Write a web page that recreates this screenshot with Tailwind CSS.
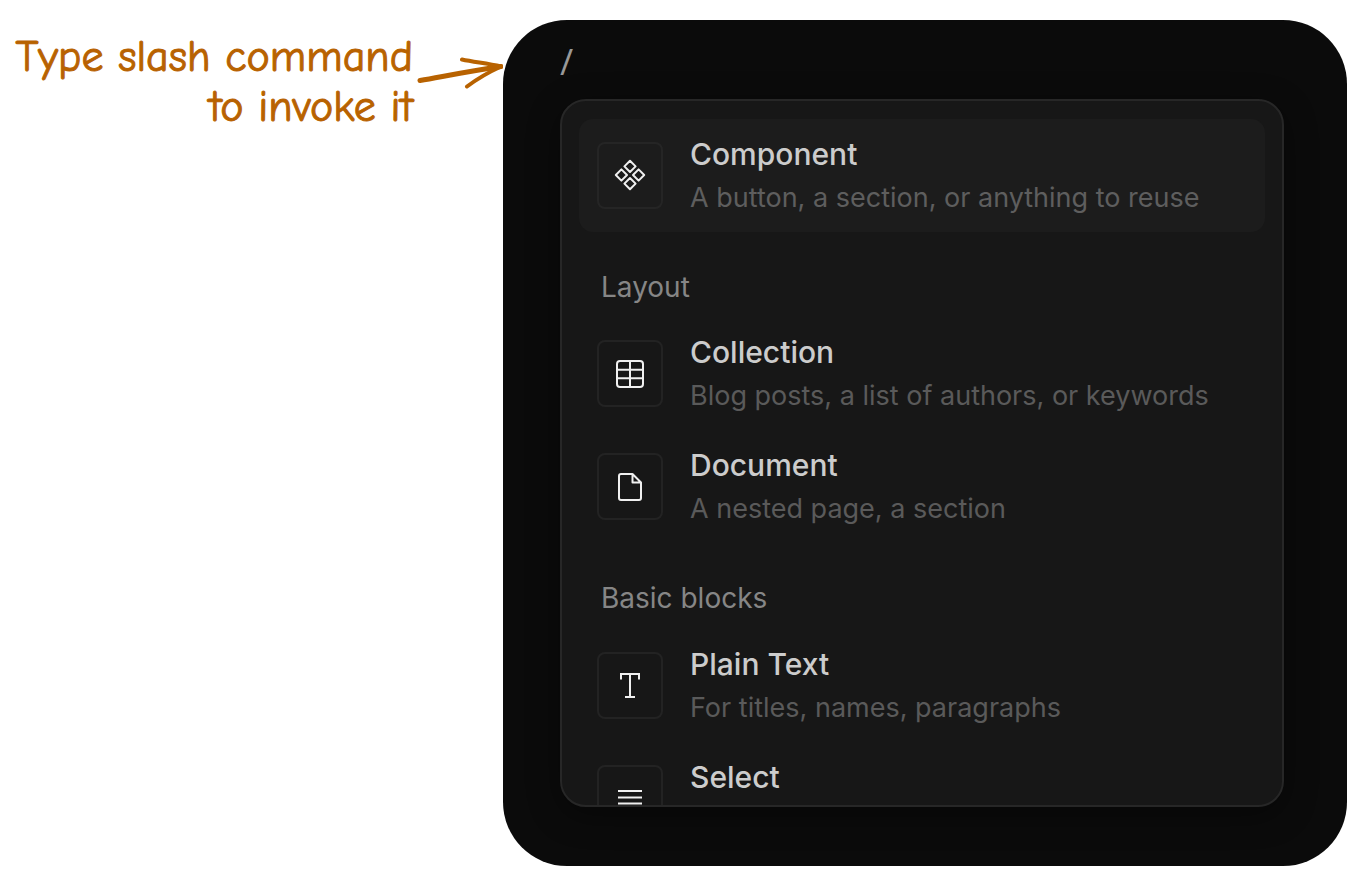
<!DOCTYPE html>
<html lang="en">
<head>
    <meta charset="UTF-8">
    <meta name="viewport" content="width=device-width, initial-scale=1.0">
    <title>Slash command menu</title>
    <script src="https://cdn.jsdelivr.net/npm/@tailwindcss/browser@4"></script>
</head>
<body class="bg-white font-['Inter',sans-serif]">
    <main class="grid grid-cols-[503fr_844fr] h-screen py-5 pr-5">
        <!-- Annotation -->
        <div class="flex items-start justify-end">
            <p class="pt-3 text-right text-[44px] leading-[50px] font-medium text-[#b86200] font-['Comic_Neue','Comic_Sans_MS',cursive] [-webkit-text-stroke:1px_#b86200] whitespace-nowrap">
                Type slash command<br>to invoke it
            </p>
            <svg class="w-[90px] h-[40px] mt-8 shrink-0" viewBox="0 0 90 40" fill="none" stroke="#b86200" stroke-width="5" stroke-linecap="round" stroke-linejoin="round" aria-hidden="true">
                <path d="M7 28.500C28 25 48 20.500 88 14.500"></path>
                <path d="M49 7.500C61 10 74 11.500 88 14.500C76 20 64 27 54 34.500" stroke-width="4"></path>
            </svg>
        </div>

        <!-- Editor card -->
        <section class="flex flex-col min-h-0 rounded-[64px] bg-[#0b0b0b] pl-[57px] pr-[63px] pt-5 pb-[59px]">
            <input type="text" value="/" aria-label="Command" class="h-11 w-full bg-transparent font-['Open_Sans',sans-serif] text-[36px] text-[#999999] outline-none">

            <div class="mt-[15px] flex-1 min-h-0 overflow-hidden rounded-[26px] border-2 border-[#272727] bg-[#171717] p-[17px] pt-[18px] shadow-[0_8px_32px_#00000066]">
                <button type="button" class="flex w-full items-center gap-[27px] rounded-[14px] bg-[#1c1c1c] px-[18px] h-[113px] text-left">
                    <span class="flex h-[67px] w-[66px] shrink-0 items-center justify-center rounded-[8px] border-2 border-[#252525]">
                        <svg class="size-[34px]" viewBox="0 0 34 34" fill="none" stroke="#f0f0f0" stroke-width="2" stroke-linejoin="round" aria-hidden="true">
                            <path d="M17 1.800l5.600 5.600L17 13l-5.600-5.600zM8.400 10.400L14 16l-5.600 5.600L2.800 16zM25.600 10.400l5.600 5.600-5.600 5.600L20 16zM17 19l5.600 5.600-5.600 5.600-5.600-5.600z"></path>
                        </svg>
                    </span>
                    <span class="h-[86px] min-w-0">
                        <span class="block text-[30px] leading-[43px] font-medium text-[#cccccc]">Component</span>
                        <span class="block text-[27px] leading-[43px] text-[#5e5e5e] whitespace-nowrap">A button, a section, or anything to reuse</span>
                    </span>
                </button>

                <h2 class="h-[85px] pt-[34px] pl-[22px] text-[28px] leading-[43px] text-[#868686]">Layout</h2>
                <button type="button" class="flex w-full items-center gap-[27px] rounded-[14px] px-[18px] h-[113px] text-left">
                    <span class="flex h-[67px] w-[66px] shrink-0 items-center justify-center rounded-[8px] border-2 border-[#232323]">
                        <svg class="size-[34px]" viewBox="0 0 34 34" fill="none" stroke="#f0f0f0" stroke-width="2" aria-hidden="true">
                            <rect x="4" y="4" width="26" height="26" rx="3"></rect>
                            <path d="M17 4v26M4 12.700h26M4 21.300h26"></path>
                        </svg>
                    </span>
                    <span class="h-[86px] min-w-0">
                        <span class="block text-[30px] leading-[43px] font-medium text-[#cccccc]">Collection</span>
                        <span class="block text-[27px] leading-[43px] text-[#5a5a5a] whitespace-nowrap">Blog posts, a list of authors, or keywords</span>
                    </span>
                </button>
                <button type="button" class="flex w-full items-center gap-[27px] rounded-[14px] px-[18px] h-[113px] text-left">
                    <span class="flex h-[67px] w-[66px] shrink-0 items-center justify-center rounded-[8px] border-2 border-[#232323]">
                        <svg class="size-[34px]" viewBox="0 0 34 34" fill="none" stroke="#f0f0f0" stroke-width="2" stroke-linejoin="round" aria-hidden="true">
                            <path d="M19.500 4H8a2 2 0 0 0-2 2v22a2 2 0 0 0 2 2h18a2 2 0 0 0 2-2V12.500zM19.500 4v8.500H28"></path>
                        </svg>
                    </span>
                    <span class="h-[86px] min-w-0">
                        <span class="block text-[30px] leading-[43px] font-medium text-[#cccccc]">Document</span>
                        <span class="block text-[27px] leading-[43px] text-[#5a5a5a] whitespace-nowrap">A nested page, a section</span>
                    </span>
                </button>

                <h2 class="h-[86px] pt-[34px] pl-[22px] text-[28px] leading-[43px] text-[#868686]">Basic blocks</h2>
                <button type="button" class="flex w-full items-center gap-[27px] rounded-[14px] px-[18px] h-[113px] text-left">
                    <span class="flex h-[67px] w-[66px] shrink-0 items-center justify-center rounded-[8px] border-2 border-[#232323]">
                        <svg class="size-[34px]" viewBox="0 0 34 34" fill="none" stroke="#f0f0f0" stroke-width="2" aria-hidden="true">
                            <path d="M8 10.500V5h18v5.500M17 5v23M12 28h10"></path>
                        </svg>
                    </span>
                    <span class="h-[86px] min-w-0">
                        <span class="block text-[30px] leading-[43px] font-medium text-[#cccccc]">Plain Text</span>
                        <span class="block text-[27px] leading-[43px] text-[#5a5a5a] whitespace-nowrap">For titles, names, paragraphs</span>
                    </span>
                </button>
                <button type="button" class="flex w-full items-center gap-[27px] rounded-[14px] px-[18px] h-[113px] text-left">
                    <span class="flex h-[67px] w-[66px] shrink-0 items-center justify-center rounded-[8px] border-2 border-[#232323]">
                        <svg class="size-[34px]" viewBox="0 0 34 34" fill="none" stroke="#f0f0f0" stroke-width="2" aria-hidden="true">
                            <path d="M5 9h24M5 15.500h24M5 21.500h24"></path>
                        </svg>
                    </span>
                    <span class="h-[86px] min-w-0">
                        <span class="block text-[30px] leading-[43px] font-medium text-[#cccccc]">Select</span>
                    </span>
                </button>
            </div>
        </section>
    </main>
</body>
</html>
